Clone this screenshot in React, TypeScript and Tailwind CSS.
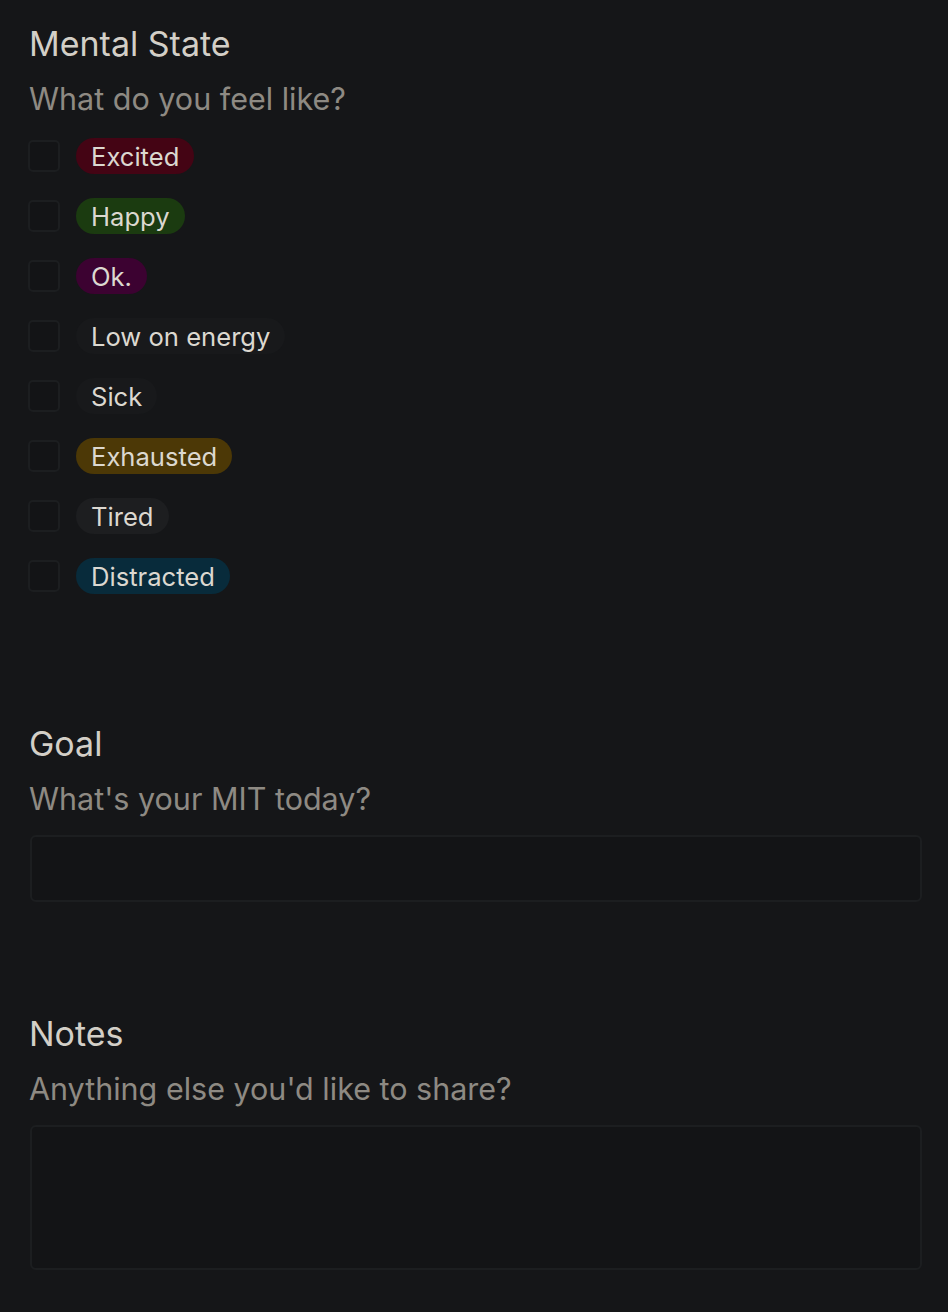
import React from "react";

const tags: { label: string; bg: string }[] = [
  { label: "Excited", bg: "bg-[#440414]" },
  { label: "Happy", bg: "bg-[#1b3b10]" },
  { label: "Ok.", bg: "bg-[#3c0231]" },
  { label: "Low on energy", bg: "bg-[#18191b]" },
  { label: "Sick", bg: "bg-[#18191b]" },
  { label: "Exhausted", bg: "bg-[#4c3806]" },
  { label: "Tired", bg: "bg-[#1d1e20]" },
  { label: "Distracted", bg: "bg-[#082b3b]" },
];

export default function App() {
  return (
    <div
      className="min-h-[1312px] w-full bg-[#151618] pl-[30px] pr-[26px] pt-[24px]"
      style={{ fontFamily: "Inter, 'Noto Sans', sans-serif" }}
    >
      <h2 className="-ml-[1px] text-[34px] leading-[40px] text-[#d3cfc7]">Mental State</h2>
      <p className="-ml-[1px] mt-[17px] text-[30.5px] leading-[36px] text-[#8e8a83]">What do you feel like?</p>
      <div className="mt-[9px] flex flex-col">
        {tags.map((t) => (
          <div key={t.label} className="flex h-[60px] items-center gap-[16px]">
            <div className="-ml-[2px] h-[32px] w-[32px] rounded-[5px] border-2 border-[#1c1e20] bg-[#131416]" />
            <span
              className={`${t.bg} flex h-[36px] items-center rounded-full px-[15px] pt-[2px] text-[25.6px] text-[#dcd8d0]`}
            >
              {t.label}
            </span>
          </div>
        ))}
      </div>

      <h2 className="-ml-[1px] mt-[118px] text-[34px] leading-[40px] text-[#d3cfc7]">Goal</h2>
      <p className="-ml-[1px] mt-[17px] text-[30.5px] leading-[36px] text-[#8e8a83]">What's your MIT today?</p>
      <div className="mt-[18px] h-[67px] w-full rounded-[6px] border-2 border-[#1c1e20] bg-[#131416]" />

      <h2 className="-ml-[1px] mt-[112px] text-[34px] leading-[40px] text-[#d3cfc7]">Notes</h2>
      <p className="-ml-[1px] mt-[17px] text-[30.5px] leading-[36px] text-[#8e8a83]">Anything else you'd like to share?</p>
      <div className="mt-[18px] h-[145px] w-full rounded-[6px] border-2 border-[#1c1e20] bg-[#131416]" />
    </div>
  );
}
